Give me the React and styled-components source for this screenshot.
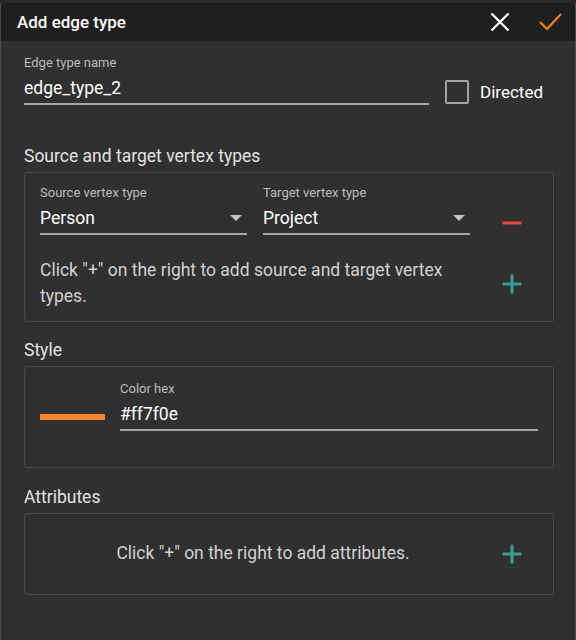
import React from "react";
import styled, { createGlobalStyle } from "styled-components";

const Global = createGlobalStyle`
  html, body { margin: 0; padding: 0; background: #2b2b2b; }
  body { font-family: Roboto, "Noto Sans", "Liberation Sans", sans-serif; }
  * { box-sizing: border-box; }
`;

const Dialog = styled.div`
  width: 576px;
  height: 637px;
  margin-top: 3px;
  background: #303030;
  border-left: 1px solid #4a4a4a;
  border-right: 1px solid #4a4a4a;
  display: flex;
  flex-direction: column;
`;

const Header = styled.div`
  height: 38px;
  background: #1f1f1f;
  display: flex;
  align-items: center;
  padding: 0 0 0 16px;
`;

const Title = styled.div`
  flex: 1;
  color: #ffffff;
  font-size: 17px;
  font-weight: 500;
  line-height: 38px;
`;

const HeaderButton = styled.button`
  width: 24px;
  height: 24px;
  padding: 0;
  margin: 0 ${(p) => p.$mr}px 0 0;
  border: none;
  background: none;
  display: flex;
  align-items: center;
  justify-content: center;
  cursor: pointer;
`;

const Content = styled.div`
  padding: 14px 21px 0 23px;
  display: flex;
  flex-direction: column;
`;

const NameRow = styled.div`
  display: flex;
  align-items: flex-end;
  gap: 16px;
`;

const Field = styled.div`
  flex: 1;
  display: flex;
  flex-direction: column;
  gap: 5px;
  min-width: 0;
`;

const Label = styled.div`
  font-size: 13px;
  line-height: 16px;
  color: #bdbdbd;
`;

const Value = styled.div`
  font-size: 17.5px;
  line-height: 24px;
  color: #ffffff;
  padding-bottom: 3px;
  border-bottom: 2px solid #a6a6a6;
  display: flex;
  align-items: center;
`;

const ValueText = styled.span`
  flex: 1;
`;

const CheckWrap = styled.label`
  display: flex;
  align-items: center;
  gap: 11px;
  margin: 0 11px 1px 0;
  color: #ffffff;
  font-size: 17px;
  line-height: 24px;
`;

const CheckBox = styled.span`
  width: 24px;
  height: 24px;
  border: 2px solid #a4a4a4;
  border-radius: 2px;
`;

const SectionTitle = styled.div`
  margin-top: ${(p) => p.$mt}px;
  margin-bottom: 4px;
  font-size: 17.5px;
  line-height: 24px;
  color: #e3e3e3;
`;

const Box = styled.div`
  border: 1px solid #4a4a4a;
  border-radius: 3px;
`;

const VertexBox = styled(Box)`
  display: grid;
  grid-template-columns: 1fr 1fr 52px;
  column-gap: 16px;
  row-gap: 23px;
  padding: 12px 15px 12px 15px;
`;

const HintText = styled.div`
  font-size: 17.5px;
  line-height: 25.5px;
  color: #d2d2d2;
  text-align: ${(p) => p.$align || "left"};
`;

const SpanTwo = styled.div`
  grid-column: span 2;
  align-self: center;
`;

const IconCell = styled.div`
  display: flex;
  justify-content: center;
  align-self: ${(p) => p.$align};
`;

const IconButton = styled.button`
  width: 24px;
  height: 24px;
  padding: 0;
  border: none;
  background: none;
  display: flex;
  align-items: center;
  justify-content: center;
  cursor: pointer;
`;

const StyleBox = styled(Box)`
  height: 102px;
  display: flex;
  align-items: center;
  gap: 15px;
  padding: 0 15px;
`;

const ColorBar = styled.div`
  width: 65px;
  height: 6px;
  background: ${(p) => p.$color};
  flex-shrink: 0;
`;

const ColorField = styled(Field)`
  align-self: flex-start;
  margin-top: 14px;
`;

const AttrBox = styled(Box)`
  height: 82px;
  display: grid;
  grid-template-columns: 1fr 52px;
  align-items: center;
  padding: 0 15px;
`;

const Minus = ({ color }) => (
  <svg width="24" height="24" viewBox="0 0 24 24">
    <line x1="2.5" y1="12" x2="21.5" y2="12" stroke={color} strokeWidth="3" />
  </svg>
);

const Plus = ({ color }) => (
  <svg width="24" height="24" viewBox="0 0 24 24">
    <line x1="2.5" y1="12" x2="21.5" y2="12" stroke={color} strokeWidth="3" />
    <line x1="12" y1="2.5" x2="12" y2="21.5" stroke={color} strokeWidth="3" />
  </svg>
);

const Arrow = () => (
  <svg width="12" height="6" viewBox="0 0 12 6" style={{ marginRight: 5 }}>
    <polygon points="0,0 12,0 6,6" fill="#c4c4c4" />
  </svg>
);

function SelectField({ label, value }) {
  return (
    <Field>
      <Label>{label}</Label>
      <Value>
        <ValueText>{value}</ValueText>
        <Arrow />
      </Value>
    </Field>
  );
}

export default function App() {
  return (
    <>
      <Global />
      <Dialog>
        <Header>
          <Title>Add edge type</Title>
          <HeaderButton $mr={26} aria-label="Close">
            <svg width="24" height="24" viewBox="0 0 24 24">
              <path d="M3.5 3.5 L20.5 20.5 M20.5 3.5 L3.5 20.5" stroke="#ffffff" strokeWidth="2.4" fill="none" />
            </svg>
          </HeaderButton>
          <HeaderButton $mr={13} aria-label="Save">
            <svg width="24" height="24" viewBox="0 0 24 24">
              <path d="M2 12 L9 19 L23 4" stroke="#f5821f" strokeWidth="2.2" fill="none" />
            </svg>
          </HeaderButton>
        </Header>
        <Content>
          <NameRow>
            <Field>
              <Label>Edge type name</Label>
              <Value>edge_type_2</Value>
            </Field>
            <CheckWrap>
              <CheckBox />
              Directed
            </CheckWrap>
          </NameRow>

          <SectionTitle $mt={39}>Source and target vertex types</SectionTitle>
          <VertexBox>
            <SelectField label="Source vertex type" value="Person" />
            <SelectField label="Target vertex type" value="Project" />
            <IconCell $align="end">
              <IconButton aria-label="Remove">
                <Minus color="#e0503c" />
              </IconButton>
            </IconCell>
            <SpanTwo>
              <HintText>Click "+" on the right to add source and target vertex types.</HintText>
            </SpanTwo>
            <IconCell $align="center">
              <IconButton aria-label="Add">
                <Plus color="#3a9e90" />
              </IconButton>
            </IconCell>
          </VertexBox>

          <SectionTitle $mt={16}>Style</SectionTitle>
          <StyleBox>
            <ColorBar $color="#f5862a" />
            <ColorField>
              <Label>Color hex</Label>
              <Value>#ff7f0e</Value>
            </ColorField>
          </StyleBox>

          <SectionTitle $mt={17}>Attributes</SectionTitle>
          <AttrBox>
            <HintText $align="center">Click "+" on the right to add attributes.</HintText>
            <IconCell $align="center">
              <IconButton aria-label="Add attribute">
                <Plus color="#3a9e90" />
              </IconButton>
            </IconCell>
          </AttrBox>
        </Content>
      </Dialog>
    </>
  );
}
